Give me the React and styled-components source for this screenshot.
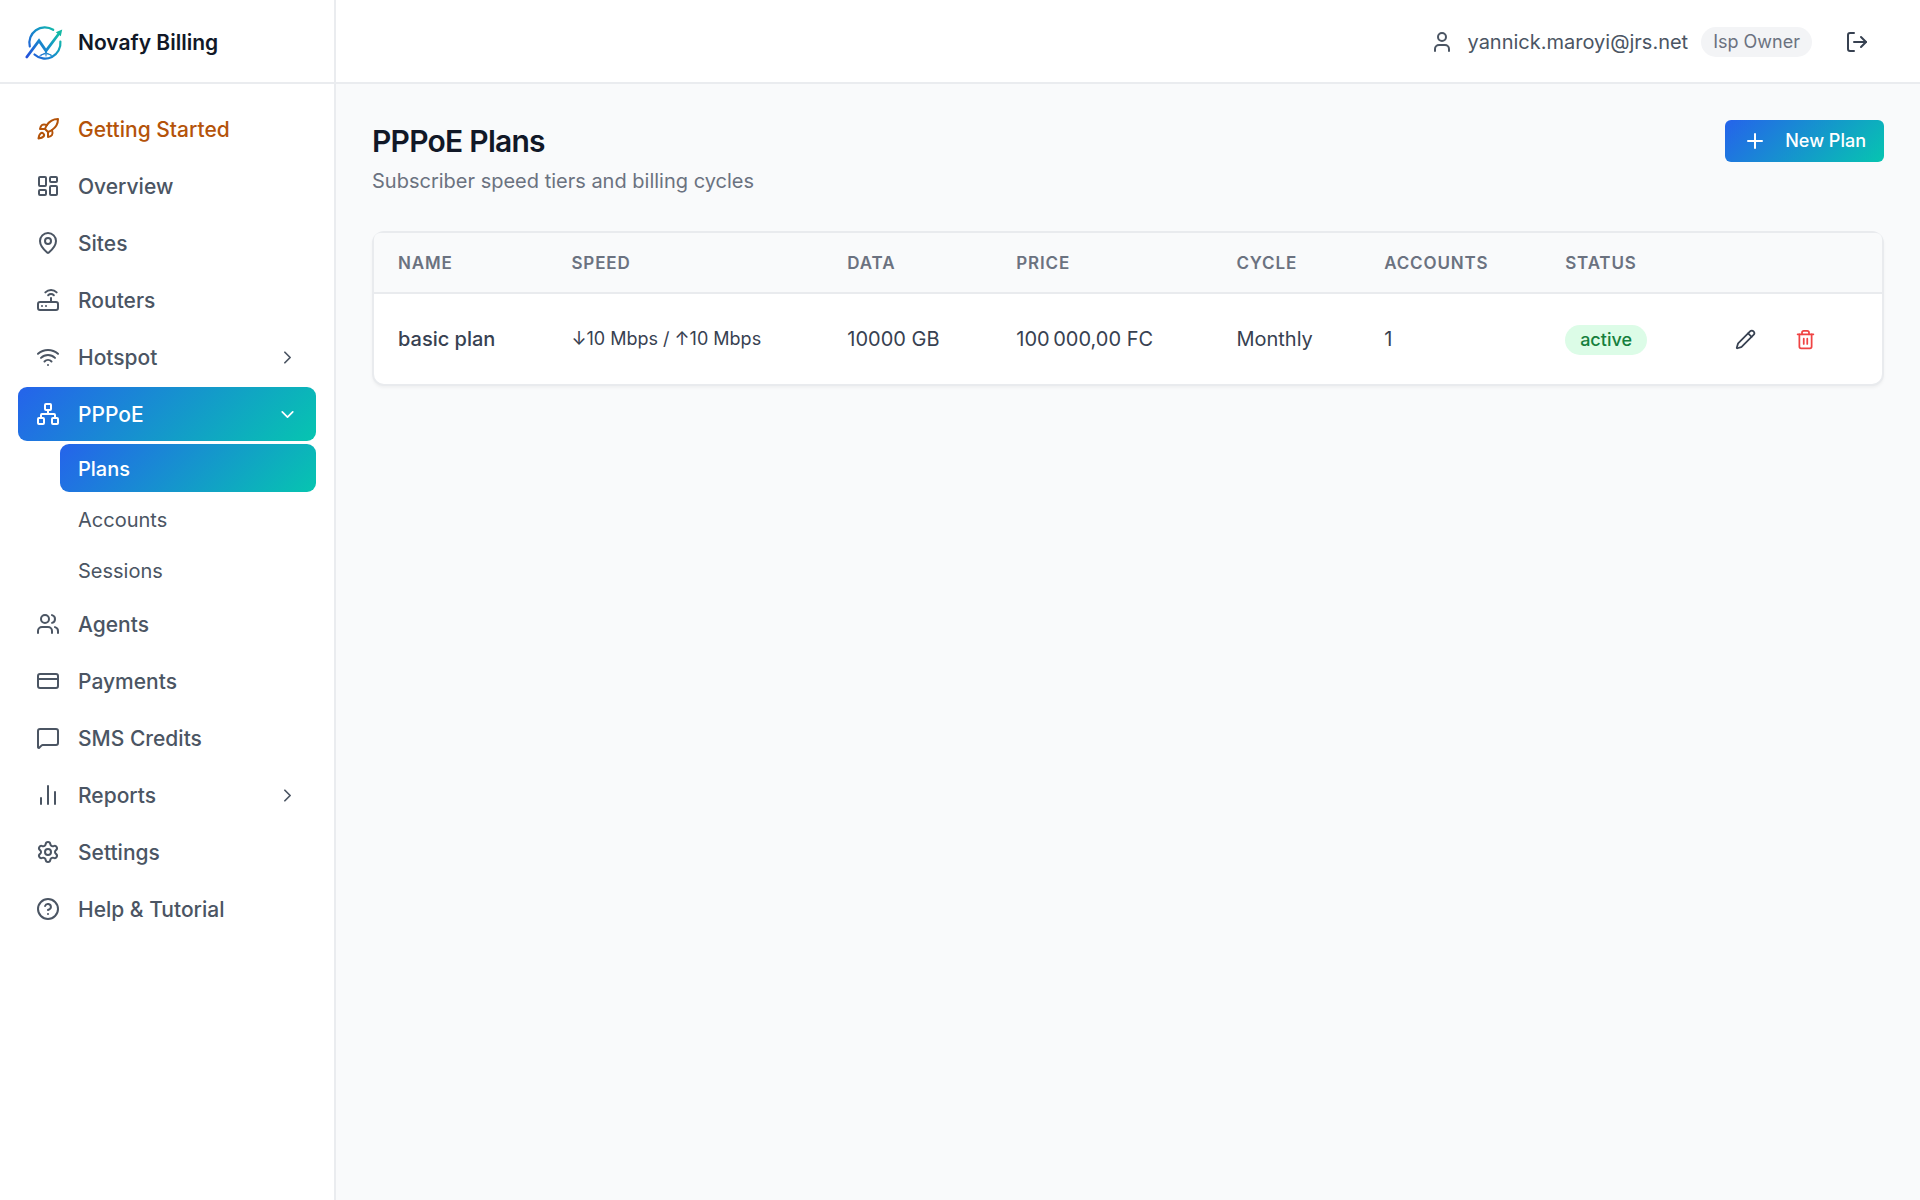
import React, { useState } from 'react';
import styled, { createGlobalStyle, css } from 'styled-components';
import {
  Rocket, LayoutDashboard, MapPin, Router, Wifi, Network, Users, CreditCard,
  MessageSquare, ChartNoAxesColumn, Settings, CircleQuestionMark,
  ChevronRight, ChevronDown, User, LogOut, Plus, Pencil, Trash2,
} from 'lucide-react';

const GlobalStyle = createGlobalStyle`
  * { box-sizing: border-box; }
  body {
    margin: 0;
    background: #f9fafb;
    color: #374151;
    font-family: Inter, "Liberation Sans", sans-serif;
    font-size: 20px;
    line-height: 30px;
    -webkit-font-smoothing: antialiased;
  }
  button { font: inherit; border: 0; background: none; cursor: pointer; }
  svg { flex-shrink: 0; }
`;

const gradient = css`
  background: linear-gradient(135deg, #2563eb, #06c5b0);
  color: #fff;
`;

const Layout = styled.div`
  display: flex;
  min-height: 100vh;
`;

const Sidebar = styled.aside`
  width: 336px;
  flex-shrink: 0;
  background: #fff;
  border-right: 2px solid #eaecef;
`;

const Brand = styled.div`
  display: flex;
  align-items: center;
  gap: 14px;
  height: 84px;
  padding: 2px 24px 0;
  border-bottom: 2px solid #eaecef;
  color: #111827;
  font-size: 21px;
  font-weight: 600;
`;

const BrandName = styled.span`
  padding-top: 2px;
`;

const Nav = styled.nav`
  display: flex;
  flex-direction: column;
  gap: 3px;
  padding: 18px;
`;

const itemStyle = css`
  display: flex;
  align-items: center;
  gap: 18px;
  width: 100%;
  padding: 11px 18px;
  border-radius: 9px;
  color: ${({ $accent }) => ($accent ? '#b45309' : '#4b5563')};
  text-align: left;
  text-decoration: none;
  ${({ $active }) => $active && gradient}
  && { font-size: 21px; font-weight: 500; }
`;

const NavLink = styled.a`${itemStyle}`;
const NavButton = styled.button`${itemStyle}`;
const NavLabel = styled.span`
  flex: 1;
  padding-top: 2px;
`;

const SubNav = styled.div`
  display: flex;
  flex-direction: column;
  gap: 3px;
  padding-left: 42px;
`;

const SubLink = styled.a`
  padding: 10px 18px 8px;
  border-radius: 9px;
  color: #4b5563;
  text-decoration: none;
  ${({ $active }) => $active && gradient}
  font-weight: ${({ $active }) => ($active ? 500 : 400)};
`;

const Page = styled.div`
  flex: 1;
  min-width: 0;
`;

const TopBar = styled.header`
  display: flex;
  align-items: center;
  justify-content: flex-end;
  gap: 18px;
  height: 84px;
  padding: 2px 36px 0;
  background: #fff;
  border-bottom: 2px solid #eaecef;
`;

const Account = styled.div`
  display: flex;
  align-items: center;
  gap: 13px;
  color: #4b5563;
`;

const Role = styled.span`
  padding: 0 12px;
  border-radius: 15px;
  background: #f3f4f6;
  color: #6b7280;
  font-size: 18px;
`;

const IconButton = styled.button`
  display: flex;
  padding: 9px 15px;
  color: ${({ $danger }) => ($danger ? '#ef4444' : '#374151')};
`;

const Content = styled.main`
  padding: 36px;
`;

const PageHead = styled.div`
  display: flex;
  align-items: flex-start;
  justify-content: space-between;
  margin-bottom: 35px;
`;

const Title = styled.h1`
  margin: 0;
  color: #111827;
  font-size: 30px;
  line-height: 42px;
  font-weight: 600;
  letter-spacing: -0.025em;
`;

const Subtitle = styled.p`
  margin: 4px 0 0;
  color: #6b7280;
`;

const PrimaryButton = styled.button`
  display: flex;
  align-items: center;
  gap: 18px;
  padding: 6px 18px;
  border-radius: 6px;
  ${gradient}
  && { font-size: 18px; font-weight: 500; }
`;

const Card = styled.div`
  background: #fff;
  border: 2px solid #e9ebee;
  border-radius: 12px;
  box-shadow: 0 2px 3px rgba(0, 0, 0, 0.04);
`;

const Table = styled.table`
  width: 100%;
  table-layout: fixed;
  border-collapse: separate;
  border-spacing: 0;
`;

const Th = styled.th`
  width: ${({ $width }) => $width};
  padding: 15px 24px 14px;
  background: #f9fafb;
  border-bottom: 2px solid #e9ebee;
  color: #6b7280;
  font-size: 17px;
  font-weight: 600;
  letter-spacing: 0.05em;
  text-align: left;
  text-transform: uppercase;
  &:first-child { border-top-left-radius: 6px; }
  &:last-child { border-top-right-radius: 6px; }
`;

const Td = styled.td`
  height: 90px;
  padding: 0 24px;
  font-size: ${({ $small }) => ($small ? '18px' : '20px')};
  font-weight: ${({ $strong }) => ($strong ? 500 : 400)};
  white-space: nowrap;
`;

const Status = styled.span`
  display: inline-block;
  padding: 0 15px;
  border-radius: 15px;
  background: #dcfce7;
  color: #15803d;
  font-size: 18px;
  font-weight: 500;
`;

const Actions = styled.div`
  display: flex;
  gap: 9px;
`;

const Logo = () => (
  <svg width="40" height="40" viewBox="0 -2 40 40" fill="none" aria-hidden="true">
    <defs>
      <linearGradient id="logo" x1="2" y1="32" x2="38" y2="6" gradientUnits="userSpaceOnUse">
        <stop stopColor="#2450dc" />
        <stop offset="0.55" stopColor="#1593c8" />
        <stop offset="1" stopColor="#12c89c" />
      </linearGradient>
    </defs>
    <g stroke="url(#logo)" strokeLinecap="round">
      <path strokeWidth="2.2" d="M5.8 22.5A15.5 15.5 0 0 1 29.2 5.8M36.4 17.5A15.5 15.5 0 0 1 10.5 30.5" />
      <path strokeWidth="2.8" strokeLinejoin="miter" d="M2.8 33 15 16.6l7 10.2L35.4 9" />
      <path strokeWidth="1" d="M22 26v6M15.5 32c1-3 12-3 13 0M17 31.5l5-3 5 3" />
    </g>
    <path fill="#12b8a4" d="m38.2 5.4-6.4 2.9 5 4z" />
  </svg>
);

const navItems = [
  { label: 'Getting Started', icon: Rocket, accent: true },
  { label: 'Overview', icon: LayoutDashboard },
  { label: 'Sites', icon: MapPin },
  { label: 'Routers', icon: Router },
  { label: 'Hotspot', icon: Wifi, children: ['Plans', 'Vouchers', 'Sessions'] },
  { label: 'PPPoE', icon: Network, active: true, children: ['Plans', 'Accounts', 'Sessions'] },
  { label: 'Agents', icon: Users },
  { label: 'Payments', icon: CreditCard },
  { label: 'SMS Credits', icon: MessageSquare },
  { label: 'Reports', icon: ChartNoAxesColumn, children: ['Revenue', 'Usage'] },
  { label: 'Settings', icon: Settings },
  { label: 'Help & Tutorial', icon: CircleQuestionMark },
];

const columns = [
  ['Name', '11.5%'],
  ['Speed', '18.3%'],
  ['Data', '11.2%'],
  ['Price', '14.6%'],
  ['Cycle', '9.8%'],
  ['Accounts', '12%'],
  ['Status', '10.3%'],
  ['', '12.3%'],
];

const plans = [
  { name: 'basic plan', speed: '↓10 Mbps / ↑10 Mbps', data: '10000 GB', price: '100\u202f000,00 FC', cycle: 'Monthly', accounts: 1, status: 'active' },
];

const NavGroup = ({ item, open, onToggle }) => {
  const Icon = item.icon;
  const Chevron = open ? ChevronDown : ChevronRight;
  return (
    <>
      <NavButton type="button" $active={item.active} aria-expanded={open} onClick={onToggle}>
        <Icon size={24} strokeWidth={2} />
        <NavLabel>{item.label}</NavLabel>
        <Chevron size={21} strokeWidth={2} />
      </NavButton>
      {open && (
        <SubNav>
          {item.children.map((child) => (
            <SubLink key={child} href="#" $active={item.active && child === 'Plans'}>{child}</SubLink>
          ))}
        </SubNav>
      )}
    </>
  );
};

const App = () => {
  const [open, setOpen] = useState('PPPoE');

  return (
    <Layout>
      <GlobalStyle />
      <Sidebar>
        <Brand>
          <Logo />
          <BrandName>Novafy Billing</BrandName>
        </Brand>
        <Nav>
          {navItems.map((item) => {
            if (item.children) {
              return (
                <NavGroup
                  key={item.label}
                  item={item}
                  open={open === item.label}
                  onToggle={() => setOpen(open === item.label ? '' : item.label)}
                />
              );
            }
            const Icon = item.icon;
            return (
              <NavLink key={item.label} href="#" $accent={item.accent}>
                <Icon size={24} strokeWidth={2} />
                <NavLabel>{item.label}</NavLabel>
              </NavLink>
            );
          })}
        </Nav>
      </Sidebar>
      <Page>
        <TopBar>
          <Account>
            <User size={24} strokeWidth={2} />
            <span>yannick.maroyi@jrs.net</span>
            <Role>Isp Owner</Role>
          </Account>
          <IconButton type="button" aria-label="Log out"><LogOut size={24} /></IconButton>
        </TopBar>
        <Content>
          <PageHead>
            <div>
              <Title>PPPoE Plans</Title>
              <Subtitle>Subscriber speed tiers and billing cycles</Subtitle>
            </div>
            <PrimaryButton type="button">
              <Plus size={24} />
              New Plan
            </PrimaryButton>
          </PageHead>
          <Card>
            <Table>
              <thead>
                <tr>
                  {columns.map(([label, width]) => (
                    <Th key={label} $width={width} scope="col">{label}</Th>
                  ))}
                </tr>
              </thead>
              <tbody>
                {plans.map((plan) => (
                  <tr key={plan.name}>
                    <Td $strong>{plan.name}</Td>
                    <Td $small>{plan.speed}</Td>
                    <Td>{plan.data}</Td>
                    <Td>{plan.price}</Td>
                    <Td>{plan.cycle}</Td>
                    <Td>{plan.accounts}</Td>
                    <Td><Status>{plan.status}</Status></Td>
                    <Td>
                      <Actions>
                        <IconButton type="button" aria-label="Edit plan"><Pencil size={21} /></IconButton>
                        <IconButton type="button" aria-label="Delete plan" $danger><Trash2 size={21} /></IconButton>
                      </Actions>
                    </Td>
                  </tr>
                ))}
              </tbody>
            </Table>
          </Card>
        </Content>
      </Page>
    </Layout>
  );
};

export default App;
